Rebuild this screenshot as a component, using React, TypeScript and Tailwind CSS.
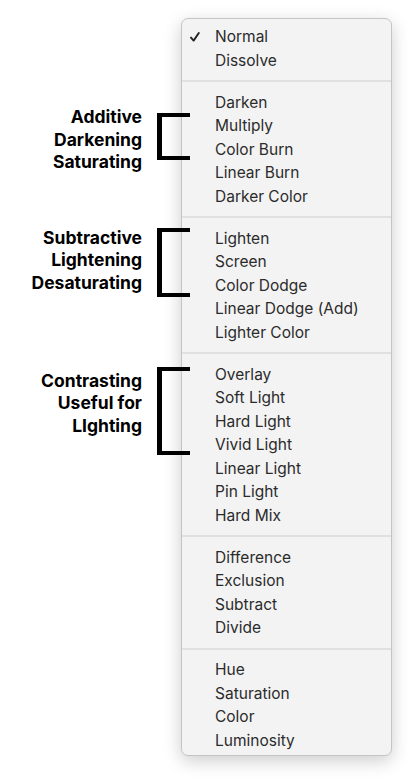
const groups: string[][] = [
  ['Normal', 'Dissolve'],
  ['Darken', 'Multiply', 'Color Burn', 'Linear Burn', 'Darker Color'],
  ['Lighten', 'Screen', 'Color Dodge', 'Linear Dodge (Add)', 'Lighter Color'],
  ['Overlay', 'Soft Light', 'Hard Light', 'Vivid Light', 'Linear Light', 'Pin Light', 'Hard Mix'],
  ['Difference', 'Exclusion', 'Subtract', 'Divide'],
  ['Hue', 'Saturation', 'Color', 'Luminosity'],
]

function Note({ lines, bracket, textTop, bracketTop, className = '' }: {
  lines: string[]
  bracket: string
  textTop: string
  bracketTop: string
  className?: string
}) {
  return (
    <div className={`flex items-start ${className}`}>
      <div className={`w-[157px] pr-[15px] text-right text-[17.5px] leading-[22.5px] font-bold text-black ${textTop}`}>
        {lines.map((l) => (
          <div key={l}>{l}</div>
        ))}
      </div>
      <div className={`relative z-10 w-[33px] shrink-0 border-y-[4px] border-l-[5px] border-black ${bracket} ${bracketTop}`} />
    </div>
  )
}

export default function App() {
  return (
    <div className="min-h-[780px] w-[417px] bg-white flex items-start" style={{ fontFamily: 'Inter, "Liberation Sans", sans-serif' }}>
      <div className="pt-[106px] flex flex-col w-[190px] shrink-0">
        <Note lines={['Additive', 'Darkening', 'Saturating']} bracket="h-[47px]" textTop="mt-0" bracketTop="mt-[7px]" />
        <Note lines={['Subtractive', 'Lightening', 'Desaturating']} bracket="h-[69px]" textTop="mt-0" bracketTop="mt-[1px]" className="mt-[53px]" />
        <Note lines={['Contrasting', 'Useful for', 'LIghting']} bracket="h-[88px]" textTop="mt-[3px]" bracketTop="mt-0" className="mt-[70px]" />
      </div>
      <div className="-ml-[9px] mt-[18px] w-[211px] rounded-[7px] border border-[#c4c4c4] bg-[#f3f3f3] pt-[6px] pb-[3px] shadow-[0_5px_18px_rgba(0,0,0,0.2)]">
        {groups.map((g, gi) => (
          <div key={gi}>
            {gi > 0 && (
              <div className="h-[18.5px] flex items-center">
                <div className="h-[2px] w-full bg-[#e0e0e0]" />
              </div>
            )}
            {g.map((item) => (
              <div key={item} className="relative h-[23.5px] flex items-center pl-[33px] text-[15.5px] text-[#2b2b2b]">
                {item === 'Normal' && (
                  <svg className="absolute left-[8px] top-[7px]" width="10" height="10" viewBox="0 0 10 10" fill="none">
                    <path d="M1 5.6 L3.6 8.6 L8.8 1" stroke="#222" strokeWidth="1.9" strokeLinecap="round" strokeLinejoin="round" />
                  </svg>
                )}
                {item}
              </div>
            ))}
          </div>
        ))}
      </div>
    </div>
  )
}
